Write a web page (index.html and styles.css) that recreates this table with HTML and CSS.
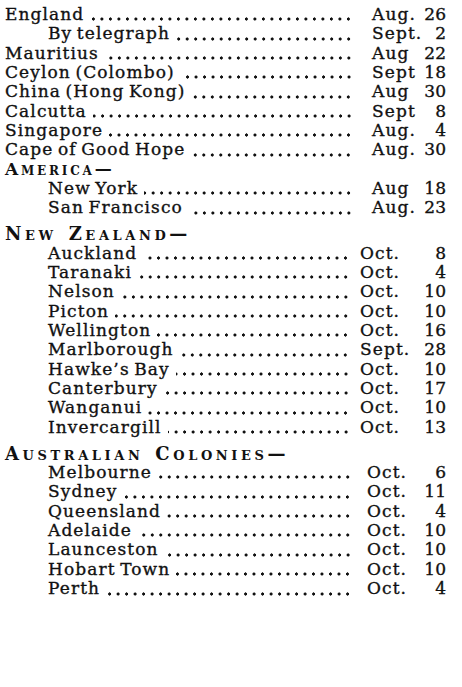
FILE: index.html
```html
<!DOCTYPE html>
<html lang="en">
<head>
<meta charset="utf-8">
<title>Mail dates</title>
<link rel="stylesheet" href="styles.css">
</head>
<body>
<main class="list">
  <section class="group g-top">
    <div class="row"><span class="name">England</span><span class="lead"></span><span class="mon">Aug.</span><span class="day">26</span></div>
    <div class="row ind"><span class="name">By telegraph</span><span class="lead"></span><span class="mon">Sept.</span><span class="day">2</span></div>
    <div class="row"><span class="name">Mauritius</span><span class="lead"></span><span class="mon">Aug</span><span class="day">22</span></div>
    <div class="row"><span class="name">Ceylon (Colombo)</span><span class="lead"></span><span class="mon">Sept</span><span class="day">18</span></div>
    <div class="row"><span class="name">China (Hong Kong)</span><span class="lead"></span><span class="mon">Aug</span><span class="day">30</span></div>
    <div class="row"><span class="name">Calcutta</span><span class="lead"></span><span class="mon">Sept</span><span class="day">8</span></div>
    <div class="row"><span class="name">Singapore</span><span class="lead"></span><span class="mon">Aug.</span><span class="day">4</span></div>
    <div class="row"><span class="name">Cape of Good Hope</span><span class="lead"></span><span class="mon">Aug.</span><span class="day">30</span></div>
    <div class="head">America—</div>
    <div class="row ind"><span class="name">New York</span><span class="lead"></span><span class="mon">Aug</span><span class="day">18</span></div>
    <div class="row ind"><span class="name">San Francisco</span><span class="lead"></span><span class="mon">Aug.</span><span class="day">23</span></div>
  </section>
  <section class="group g-nz">
    <div class="head head-wide">New Zealand—</div>
    <div class="row ind"><span class="name">Auckland</span><span class="lead"></span><span class="mon">Oct.</span><span class="day">8</span></div>
    <div class="row ind"><span class="name">Taranaki</span><span class="lead"></span><span class="mon">Oct.</span><span class="day">4</span></div>
    <div class="row ind"><span class="name">Nelson</span><span class="lead"></span><span class="mon">Oct.</span><span class="day">10</span></div>
    <div class="row ind"><span class="name">Picton</span><span class="lead"></span><span class="mon">Oct.</span><span class="day">10</span></div>
    <div class="row ind"><span class="name">Wellington</span><span class="lead"></span><span class="mon">Oct.</span><span class="day">16</span></div>
    <div class="row ind"><span class="name">Marlborough</span><span class="lead"></span><span class="mon">Sept.</span><span class="day">28</span></div>
    <div class="row ind"><span class="name">Hawke’s Bay</span><span class="lead"></span><span class="mon">Oct.</span><span class="day">10</span></div>
    <div class="row ind"><span class="name">Canterbury</span><span class="lead"></span><span class="mon">Oct.</span><span class="day">17</span></div>
    <div class="row ind"><span class="name">Wanganui</span><span class="lead"></span><span class="mon">Oct.</span><span class="day">10</span></div>
    <div class="row ind"><span class="name">Invercargill</span><span class="lead"></span><span class="mon">Oct.</span><span class="day">13</span></div>
  </section>
  <section class="group g-au">
    <div class="head head-wide">Australian Colonies—</div>
    <div class="row ind"><span class="name">Melbourne</span><span class="lead"></span><span class="mon">Oct.</span><span class="day">6</span></div>
    <div class="row ind"><span class="name">Sydney</span><span class="lead"></span><span class="mon">Oct.</span><span class="day">11</span></div>
    <div class="row ind"><span class="name">Queensland</span><span class="lead"></span><span class="mon">Oct.</span><span class="day">4</span></div>
    <div class="row ind"><span class="name">Adelaide</span><span class="lead"></span><span class="mon">Oct.</span><span class="day">10</span></div>
    <div class="row ind"><span class="name">Launceston</span><span class="lead"></span><span class="mon">Oct.</span><span class="day">10</span></div>
    <div class="row ind"><span class="name">Hobart Town</span><span class="lead"></span><span class="mon">Oct.</span><span class="day">10</span></div>
    <div class="row ind"><span class="name">Perth</span><span class="lead"></span><span class="mon">Oct.</span><span class="day">4</span></div>
  </section>
</main>
</body>
</html>
```
FILE: styles.css
```css
html, body {
  margin: 0;
  padding: 0;
  background: #fff;
}
body {
  font-family: "DejaVu Serif", "Liberation Serif", serif;
  font-size: 17px;
  color: #111;
  -webkit-text-stroke: 0.35px #111;
}
.list {
  padding: 5px 16px 0 5px;
  display: flex;
  flex-direction: column;
  gap: 6.6px;
}
.group {
  display: flex;
  flex-direction: column;
  --lead-end: 353px;
  --mon-pad: 19px;
}
.g-nz { --lead-end: 350px; --mon-pad: 10px; }
.g-au { --lead-end: 352px; --mon-pad: 15px; }
.row {
  display: grid;
  grid-template-columns: auto 1fr calc(420px - var(--lead-end)) 26px;
  height: 19.35px;
  line-height: 19.35px;
  white-space: nowrap;
  letter-spacing: 1.1px;
  word-spacing: -2px;
}
.row.ind {
  padding-left: 43px;
}
.head {
  height: 19.35px;
  line-height: 19.35px;
  font-variant: small-caps;
  letter-spacing: 2.8px;
  font-weight: bold;
  font-size: 17px;
  white-space: nowrap;
  -webkit-text-stroke: 0;
}
.head-wide {
  font-size: 18px;
  letter-spacing: 3.6px;
  word-spacing: 2px;
}
.lead {
  margin-left: 6px;
  background-image: radial-gradient(circle, #111 1.4px, rgba(0,0,0,0) 1.8px);
  background-size: 8.5px 4px;
  background-repeat: repeat-x;
  background-position: right calc(100% - 3px);
}
.mon {
  padding-left: var(--mon-pad);
}
.day {
  text-align: right;
  letter-spacing: 0;
}
```
